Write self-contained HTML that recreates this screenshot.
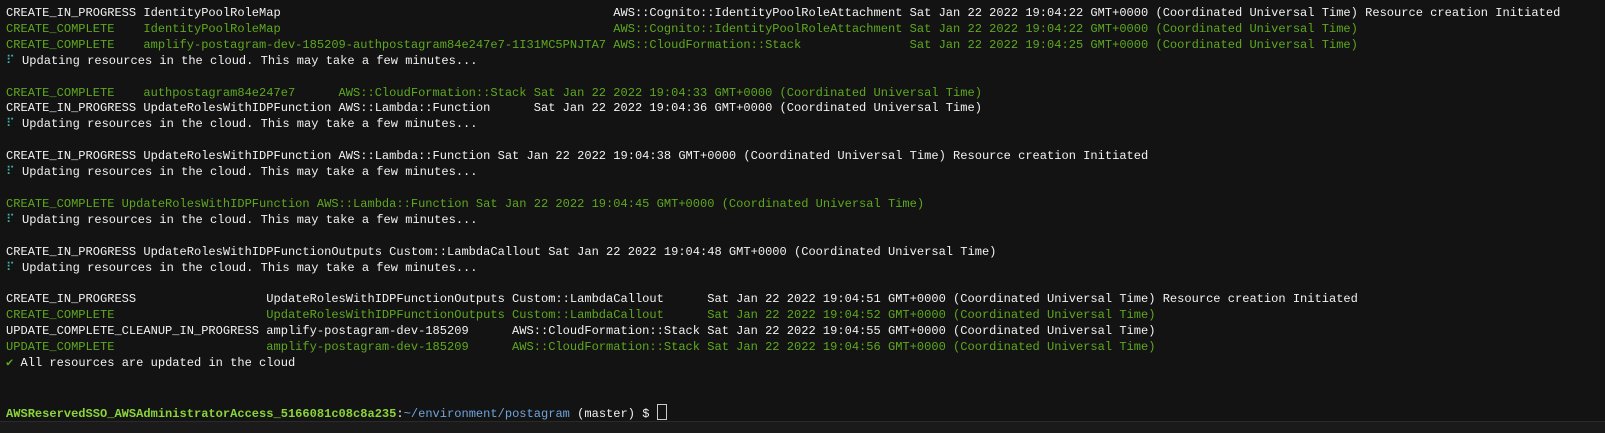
<!DOCTYPE html>
<html><head><meta charset="utf-8"><style>
html,body{margin:0;padding:0;background:#131313;width:1605px;height:432px;overflow:hidden}
pre{margin:0;position:absolute;left:6px;top:6px;font-family:"Liberation Mono","DejaVu Sans Mono",monospace;font-size:12.05px;line-height:15.9px;color:#f2f2f2;white-space:pre}
.g{color:#5ea81f}.s{color:#3fb5b0}.p{color:#8bd43a;font-weight:bold}.b{color:#6fa4dc}
.c{display:inline-block;width:8px;height:14px;border:1px solid #ccc;vertical-align:-3px}
.bar{position:absolute;left:0;top:421px;width:1605px;height:11px;background:#1a1a1a;border-top:1px solid #2a2a2a}
</style></head><body>
<pre>CREATE_IN_PROGRESS IdentityPoolRoleMap                                              AWS::Cognito::IdentityPoolRoleAttachment Sat Jan 22 2022 19:04:22 GMT+0000 (Coordinated Universal Time) Resource creation Initiated
<span class="g">CREATE_COMPLETE    IdentityPoolRoleMap                                              AWS::Cognito::IdentityPoolRoleAttachment Sat Jan 22 2022 19:04:22 GMT+0000 (Coordinated Universal Time)</span>
<span class="g">CREATE_COMPLETE    amplify-postagram-dev-185209-authpostagram84e247e7-1I31MC5PNJTA7 AWS::CloudFormation::Stack               Sat Jan 22 2022 19:04:25 GMT+0000 (Coordinated Universal Time)</span>
<span class="s">⠏</span> Updating resources in the cloud. This may take a few minutes...

<span class="g">CREATE_COMPLETE    authpostagram84e247e7      AWS::CloudFormation::Stack Sat Jan 22 2022 19:04:33 GMT+0000 (Coordinated Universal Time)</span>
CREATE_IN_PROGRESS UpdateRolesWithIDPFunction AWS::Lambda::Function      Sat Jan 22 2022 19:04:36 GMT+0000 (Coordinated Universal Time)
<span class="s">⠏</span> Updating resources in the cloud. This may take a few minutes...

CREATE_IN_PROGRESS UpdateRolesWithIDPFunction AWS::Lambda::Function Sat Jan 22 2022 19:04:38 GMT+0000 (Coordinated Universal Time) Resource creation Initiated
<span class="s">⠏</span> Updating resources in the cloud. This may take a few minutes...

<span class="g">CREATE_COMPLETE UpdateRolesWithIDPFunction AWS::Lambda::Function Sat Jan 22 2022 19:04:45 GMT+0000 (Coordinated Universal Time)</span>
<span class="s">⠏</span> Updating resources in the cloud. This may take a few minutes...

CREATE_IN_PROGRESS UpdateRolesWithIDPFunctionOutputs Custom::LambdaCallout Sat Jan 22 2022 19:04:48 GMT+0000 (Coordinated Universal Time)
<span class="s">⠏</span> Updating resources in the cloud. This may take a few minutes...

CREATE_IN_PROGRESS                  UpdateRolesWithIDPFunctionOutputs Custom::LambdaCallout      Sat Jan 22 2022 19:04:51 GMT+0000 (Coordinated Universal Time) Resource creation Initiated
<span class="g">CREATE_COMPLETE                     UpdateRolesWithIDPFunctionOutputs Custom::LambdaCallout      Sat Jan 22 2022 19:04:52 GMT+0000 (Coordinated Universal Time)</span>
UPDATE_COMPLETE_CLEANUP_IN_PROGRESS amplify-postagram-dev-185209      AWS::CloudFormation::Stack Sat Jan 22 2022 19:04:55 GMT+0000 (Coordinated Universal Time)
<span class="g">UPDATE_COMPLETE                     amplify-postagram-dev-185209      AWS::CloudFormation::Stack Sat Jan 22 2022 19:04:56 GMT+0000 (Coordinated Universal Time)</span>
<span class="g">✔</span> All resources are updated in the cloud


<span class="p">AWSReservedSSO_AWSAdministratorAccess_5166081c08c8a235</span>:<span class="b">~/environment/postagram</span> (master) $ <span class="c"></span></pre>
<div class="bar"></div>
</body></html>
